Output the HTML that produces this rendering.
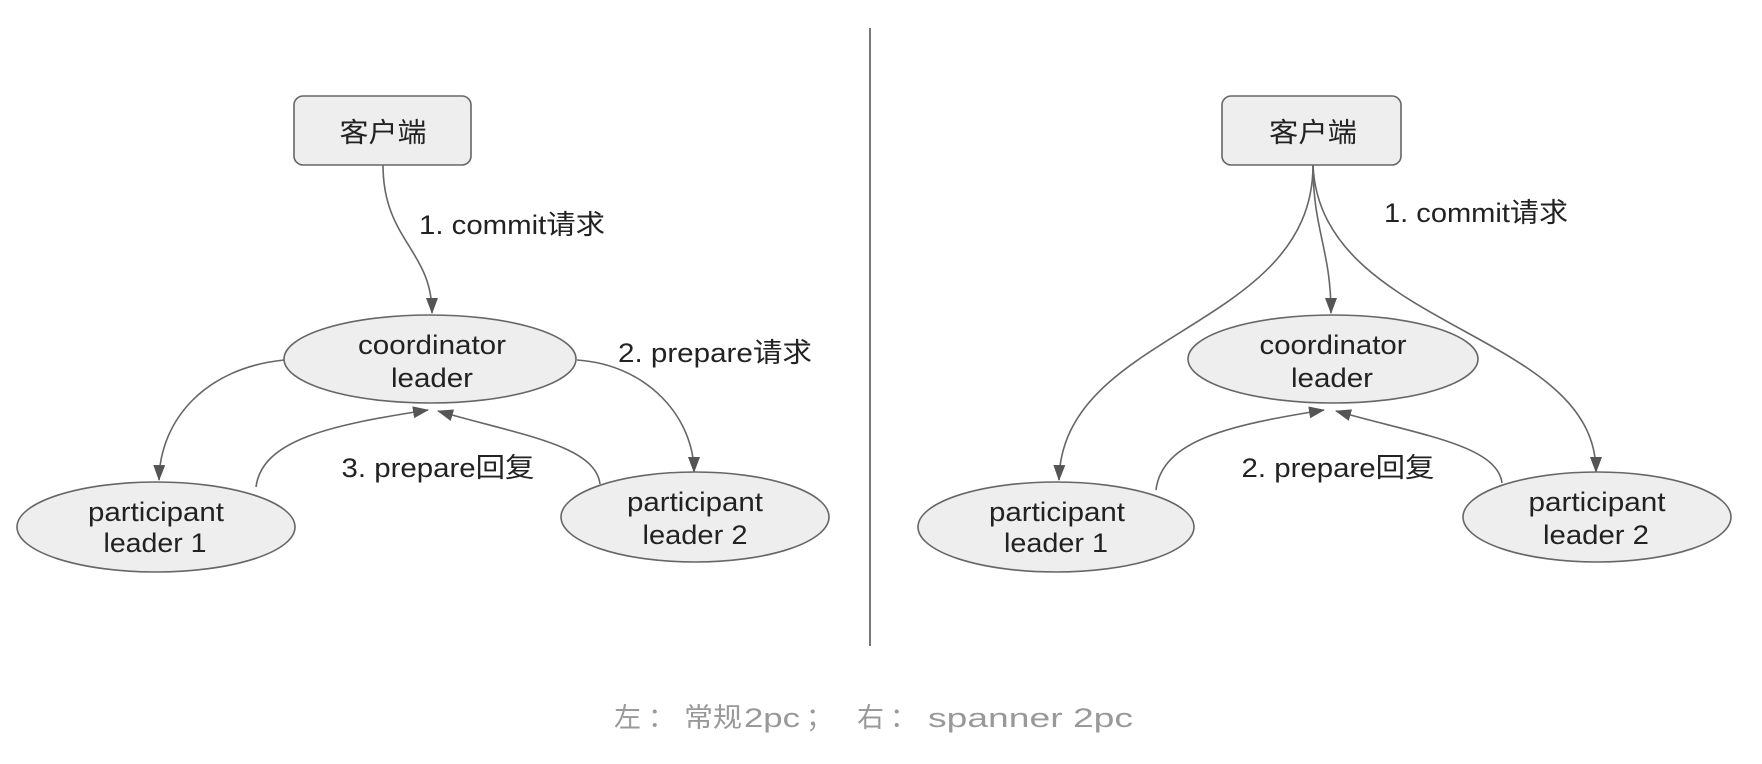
<!DOCTYPE html>
<html><head><meta charset="utf-8"><style>
html,body{margin:0;padding:0;background:#fff;}
svg{display:block;}
text{font-family:"Liberation Sans","Noto Sans CJK SC",sans-serif;fill:#222;font-size:27px;}
</style></head><body>
<svg width="1762" height="764" viewBox="0 0 1762 764" xmlns="http://www.w3.org/2000/svg">
<defs>
<marker id="a" markerWidth="16" markerHeight="12" refX="15" refY="6" orient="auto" markerUnits="userSpaceOnUse" viewBox="0 0 16 12">
<path d="M0,0 L16,6 L0,12 Z" fill="#555"/>
</marker>
</defs>
<line x1="870" y1="28" x2="870" y2="646" stroke="#777" stroke-width="2"/>
<g fill="none" stroke="#666" stroke-width="1.6">
<path d="M383,165 C383,240 432,250 432,313" marker-end="url(#a)"/>
<path d="M284,360 C205,368 160,420 159,480" marker-end="url(#a)"/>
<path d="M577,360 C650,365 694,420 694,472" marker-end="url(#a)"/>
<path d="M256,487 C262,440 330,425 428,410" marker-end="url(#a)"/>
<path d="M600,484 C595,445 520,435 438,411" marker-end="url(#a)"/>
<path d="M1313,165 C1313,230 1331,250 1331,313" marker-end="url(#a)"/>
<path d="M1313,165 C1313,330 1062,330 1059,480" marker-end="url(#a)"/>
<path d="M1313,165 C1320,330 1596,330 1596,472" marker-end="url(#a)"/>
<path d="M1156,490 C1162,440 1230,425 1324,410" marker-end="url(#a)"/>
<path d="M1502,483 C1497,445 1420,435 1336,411" marker-end="url(#a)"/>
</g>
<g fill="#eee" stroke="#666" stroke-width="1.6">
<rect x="294" y="96" width="177" height="69" rx="9"/>
<ellipse cx="430" cy="359" rx="146" ry="44"/>
<ellipse cx="156" cy="527" rx="139" ry="45"/>
<ellipse cx="695" cy="517" rx="134" ry="45"/>
<rect x="1222" y="96" width="179" height="69" rx="9"/>
<ellipse cx="1333" cy="359" rx="145" ry="44"/>
<ellipse cx="1056" cy="527" rx="138" ry="45"/>
<ellipse cx="1597" cy="517" rx="134" ry="45"/>
</g>
<g text-anchor="middle">
<text x="383" y="142" textLength="87" lengthAdjust="spacingAndGlyphs" font-size="28">客户端</text>
<text x="432" y="354" textLength="148" lengthAdjust="spacingAndGlyphs">coordinator</text>
<text x="432" y="387" textLength="82" lengthAdjust="spacingAndGlyphs">leader</text>
<text x="156" y="521" textLength="136" lengthAdjust="spacingAndGlyphs">participant</text>
<text x="155" y="552" textLength="103" lengthAdjust="spacingAndGlyphs">leader 1</text>
<text x="695" y="511" textLength="136" lengthAdjust="spacingAndGlyphs">participant</text>
<text x="695" y="544" textLength="105" lengthAdjust="spacingAndGlyphs">leader 2</text>
<text x="512" y="234" textLength="186" lengthAdjust="spacingAndGlyphs">1. commit请求</text>
<text x="715" y="362" textLength="194" lengthAdjust="spacingAndGlyphs">2. prepare请求</text>
<text x="438" y="477" textLength="193" lengthAdjust="spacingAndGlyphs">3. prepare回复</text>
<text x="1313" y="142" textLength="88" lengthAdjust="spacingAndGlyphs" font-size="28">客户端</text>
<text x="1333" y="354" textLength="147" lengthAdjust="spacingAndGlyphs">coordinator</text>
<text x="1332" y="387" textLength="82" lengthAdjust="spacingAndGlyphs">leader</text>
<text x="1057" y="521" textLength="136" lengthAdjust="spacingAndGlyphs">participant</text>
<text x="1056" y="552" textLength="104" lengthAdjust="spacingAndGlyphs">leader 1</text>
<text x="1597" y="511" textLength="137" lengthAdjust="spacingAndGlyphs">participant</text>
<text x="1596" y="544" textLength="106" lengthAdjust="spacingAndGlyphs">leader 2</text>
<text x="1476" y="222" textLength="184" lengthAdjust="spacingAndGlyphs">1. commit请求</text>
<text x="1338" y="477" textLength="193" lengthAdjust="spacingAndGlyphs">2. prepare回复</text>
</g>
<text y="727" font-size="33" style="fill:#999"><tspan x="614">左</tspan><tspan x="648">：</tspan><tspan x="684" textLength="58" lengthAdjust="spacingAndGlyphs">常规</tspan><tspan x="744" textLength="56" lengthAdjust="spacingAndGlyphs">2pc</tspan><tspan x="806">；</tspan><tspan x="857">右</tspan><tspan x="890">：</tspan><tspan x="928" textLength="205" lengthAdjust="spacingAndGlyphs">spanner 2pc</tspan></text>
</svg>
</body></html>
